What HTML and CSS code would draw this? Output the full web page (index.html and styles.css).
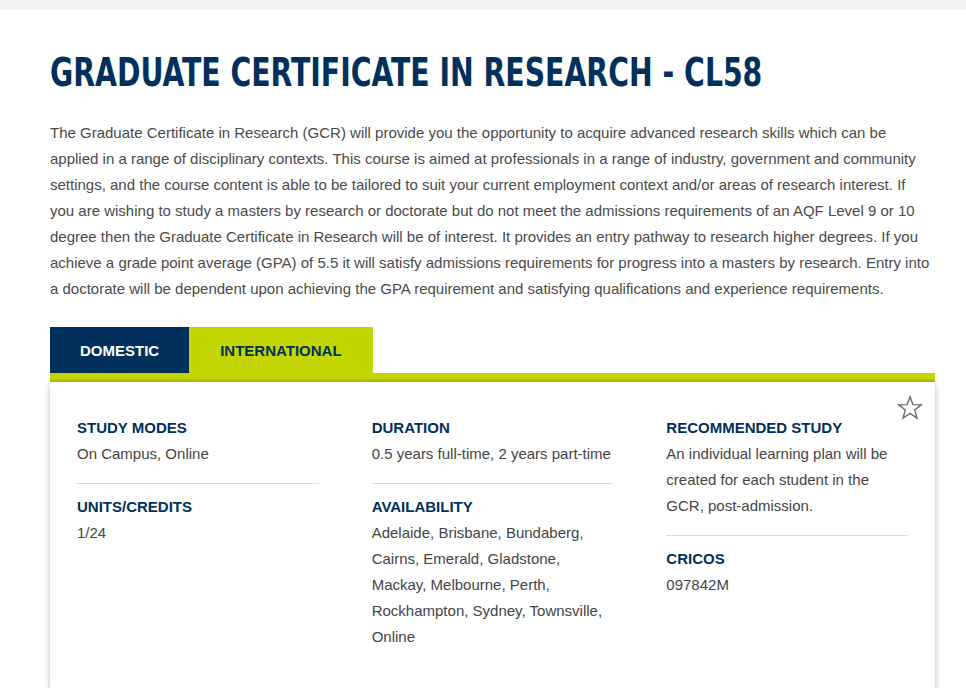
FILE: index.html
```html
<!DOCTYPE html>
<html lang="en">
<head>
  <meta charset="UTF-8">
  <meta name="viewport" content="width=device-width, initial-scale=1.0">
  <title>Graduate Certificate in Research - CL58</title>
  <link rel="stylesheet" href="styles.css">
</head>
<body>
<div class="top-strip"></div>

<div class="course">
  <h1 class="course-title">Graduate Certificate in Research - CL58</h1>

  <p class="intro">The Graduate Certificate in Research (GCR) will provide you the opportunity to acquire advanced research skills which can be applied in a range of disciplinary contexts. This course is aimed at professionals in a range of industry, government and community settings, and the course content is able to be tailored to suit your current employment context and/or areas of research interest. If you are wishing to study a masters by research or doctorate but do not meet the admissions requirements of an AQF Level 9 or 10 degree then the Graduate Certificate in Research will be of interest. It provides an entry pathway to research higher degrees. If you achieve a grade point average (GPA) of 5.5 it will satisfy admissions requirements for progress into a masters by research. Entry into a doctorate will be dependent upon achieving the GPA requirement and satisfying qualifications and experience requirements.</p>

  <div class="tabs">
    <button class="tab tab-domestic">Domestic</button>
    <button class="tab tab-international active">International</button>
  </div>
  <div class="tab-rule"></div>

  <div class="facts">
    <svg class="fav-star" width="26" height="26" viewBox="0 0 26 26">
      <path d="M13 1.8 L15.9 9.6 L24.2 9.9 L17.7 15 L20 23.1 L13 18.4 L6 23.1 L8.3 15 L1.8 9.9 L10.1 9.6 Z" fill="none" stroke="#6b6b6b" stroke-width="1.4" stroke-linejoin="miter"/>
    </svg>

    <div class="facts-col">
      <div class="fact">
        <h3>Study modes</h3>
        <p>On Campus, Online</p>
      </div>
      <div class="fact">
        <h3>Units/Credits</h3>
        <p>1/24</p>
      </div>
    </div>

    <div class="facts-col">
      <div class="fact">
        <h3>Duration</h3>
        <p>0.5 years full-time, 2 years part-time</p>
      </div>
      <div class="fact">
        <h3>Availability</h3>
        <p>Adelaide, Brisbane, Bundaberg, Cairns, Emerald, Gladstone, Mackay, Melbourne, Perth, Rockhampton, Sydney, Townsville, Online</p>
      </div>
    </div>

    <div class="facts-col">
      <div class="fact">
        <h3>Recommended study</h3>
        <p>An individual learning plan will be created for each student in the GCR, post-admission.</p>
      </div>
      <div class="fact">
        <h3>CRICOS</h3>
        <p>097842M</p>
      </div>
    </div>
  </div>
</div>
</body>
</html>
```

FILE: styles.css
```css
body {
  margin: 0;
  font-family: "Liberation Sans", Arial, sans-serif;
  color: #444;
  background: #fff;
}

.top-strip {
  height: 10px;
  background: #f2f2f2;
}

.course {
  width: 885px;
  padding: 0 50px 0 50px;
}

/* no condensed face installed, so squeeze the heading */
.course-title {
  margin: 40px 0 0;
  font-family: "DejaVu Sans Condensed", "Liberation Sans Narrow", "Liberation Sans", sans-serif;
  font-size: 39px;
  line-height: 46px;
  font-weight: bold;
  text-transform: uppercase;
  color: #00305b;
  white-space: nowrap;
  transform: scaleX(0.807);
  transform-origin: left center;
}

.intro {
  margin: 24px 0 0;
  width: 880px;
  font-size: 15px;
  line-height: 26px;
  color: #4a4a4a;
}

.tabs {
  display: flex;
  margin-top: 25px;
}

.tab {
  height: 46px;
  border: none;
  padding: 0 30px;
  font-family: "Liberation Sans", Arial, sans-serif;
  font-size: 15px;
  font-weight: bold;
  text-transform: uppercase;
  cursor: pointer;
}

.tab-domestic {
  background: #00305b;
  color: #fff;
}

.tab-international {
  background: #c4d600;
  color: #00305b;
  padding: 0 31px;
}

.tab-rule {
  height: 9px;
  background: linear-gradient(#c4d600 0, #c4d600 5px, #a9b600 9px);
}

.facts {
  position: relative;
  display: flex;
  gap: 53px;
  padding: 33px 27px 38px;
  background: #fff;
  box-shadow: 0 2px 6px rgba(0, 0, 0, 0.28);
}

.fav-star {
  position: absolute;
  top: 13px;
  right: 12px;
}

.facts-col {
  width: 242px;
}

.fact + .fact {
  margin-top: 16px;
  padding-top: 10px;
  border-top: 1px solid #dcdcdc;
}

.fact h3 {
  margin: 0;
  font-size: 15px;
  line-height: 26px;
  text-transform: uppercase;
  color: #00305b;
}

.fact p {
  margin: 0;
  font-size: 15px;
  line-height: 26px;
  color: #444;
}
```
